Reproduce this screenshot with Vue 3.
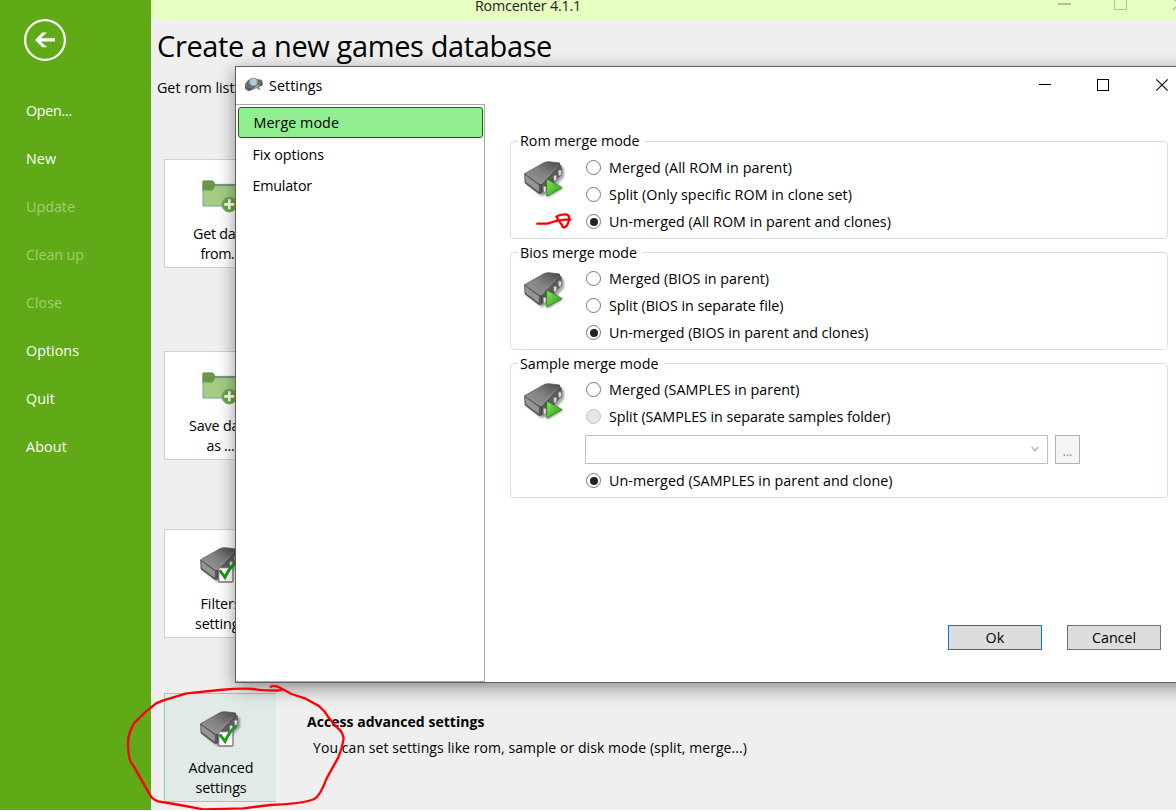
<script setup>
const menu = [
  { label: 'Open...', w: 46 },
  { label: 'New', w: 30 },
  { label: 'Update', w: 49, off: true },
  { label: 'Clean up', w: 58, off: true },
  { label: 'Close', w: 36, off: true },
  { label: 'Options', w: 53 },
  { label: 'Quit', w: 29 },
  { label: 'About', w: 41 }
]

const tiles = [
  { id: 'get', icon: 'folder', lines: [['Get data', 55], ['from...', 40]] },
  { id: 'save', icon: 'folder', lines: [['Save data', 63], ['as ...', 28]] },
  { id: 'filters', icon: 'check', lines: [['Filters', 40], ['settings', 51]] },
  { id: 'advanced', icon: 'check', lines: [['Advanced', 65], ['settings', 51]] }
]

const groups = [
  {
    id: 'rom', title: 'Rom merge mode', w: 119.5,
    options: [
      { text: 'Merged (All ROM in parent)', w: 183 },
      { text: 'Split (Only specific ROM in clone set)', w: 243 },
      { text: 'Un-merged (All ROM in parent and clones)', w: 282, on: true }
    ]
  },
  {
    id: 'bios', title: 'Bios merge mode', w: 117,
    options: [
      { text: 'Merged (BIOS in parent)', w: 160 },
      { text: 'Split (BIOS in separate file)', w: 174.5 },
      { text: 'Un-merged (BIOS in parent and clones)', w: 259.5, on: true }
    ]
  },
  {
    id: 'sample', title: 'Sample merge mode', w: 138.5,
    options: [
      { text: 'Merged (SAMPLES in parent)', w: 190.5 },
      { text: 'Split (SAMPLES in separate samples folder)', w: 281.5, off: true, folder: true },
      { text: 'Un-merged (SAMPLES in parent and clone)', w: 283.5, on: true }
    ]
  }
]

// Tracks a label so that it takes the given width in pixels.
const vFit = {
  mounted(el, { value }) {
    const gap = value - el.getBoundingClientRect().width
    el.style.letterSpacing = gap / el.textContent.length + 'px'
  }
}
</script>

<template>
  <div class="window">
    <svg class="defs" width="0" height="0">
      <defs>
        <linearGradient id="face" x1="0" y1="1" x2="1" y2="0">
          <stop offset="0" stop-color="#999" />
          <stop offset=".5" stop-color="#828282" />
          <stop offset="1" stop-color="#4a4a4a" />
        </linearGradient>
        <linearGradient id="play" x1="0" y1="0" x2="1" y2="1">
          <stop offset="0" stop-color="#8fe25c" />
          <stop offset="1" stop-color="#1fa012" />
        </linearGradient>
        <filter id="soft" x="-20%" y="-20%" width="140%" height="140%">
          <feGaussianBlur stdDeviation="3" />
        </filter>
        <symbol id="chip" viewBox="0 0 126 120">
          <path d="M6 68L52 106L72 100L120 48L120 20L70 8Z" fill="#000" opacity=".35" filter="url(#soft)" />
          <path d="M50 74L106 8L113 14L115 38L66 90L52 96Z" fill="#5c5c5c" />
          <g fill="#dcdcdc" stroke="#666" stroke-width="2">
            <path d="M57 78q8-7 11 2l-2 12l-7 5z" />
            <path d="M73 62q8-7 11 2l-2 11l-7 3z" />
            <path d="M88 45q8-7 11 2l-2 11l-7 3z" />
            <path d="M102 29q8-7 11 2l-1 11l-8 3z" />
          </g>
          <path d="M2 38L60 5Q66 2 74 2L107 6L104 20L54 70Q50 73 45 70Z" fill="url(#face)" stroke="#444" stroke-width="2" />
          <path d="M2 39L46 70L53 72L52 97L44 97L3 66Z" fill="#5a5a5a" stroke="#3a3a3a" stroke-width="2" />
          <path d="M3 42L45 73L44 92L5 63Z" fill="#959595" />
          <path d="M5 39L47 68L104 12" fill="none" stroke="#b5b5b5" stroke-width="2" opacity=".55" />
        </symbol>
        <symbol id="chip-play" viewBox="0 0 126 120">
          <use href="#chip" width="126" height="120" />
          <path d="M68 54L118 82L70 110Z" fill="#000" opacity=".45" filter="url(#soft)" />
          <path d="M68 54L114 80L68 105Z" fill="url(#play)" stroke="#158510" stroke-width="2" />
        </symbol>
        <symbol id="chip-check" viewBox="0 0 126 120">
          <use href="#chip" width="126" height="120" />
          <rect x="56" y="62" width="43" height="43" rx="3" fill="#fff" stroke="#777" stroke-width="4" />
          <path d="M59 70L75 91Q88 62 110 44" fill="none" stroke="#1e981e" stroke-width="9" />
        </symbol>
        <symbol id="folder" viewBox="0 0 114 102">
          <path d="M3 14H102V78H3Z" fill="#a5cd84" stroke="#8298a4" stroke-width="3" />
          <path d="M2 5Q2 2 5 2H33L40 13H108V17H39L32 31H2Z" fill="#69993f" stroke="#7c8f99" stroke-width="2" />
          <circle cx="82" cy="73" r="23" fill="#67a83e" stroke="#8ebd70" stroke-width="3" />
          <path d="M82 58V88M67 73H97" stroke="#fff" stroke-width="8" />
        </symbol>
      </defs>
    </svg>

    <aside class="side">
      <svg class="back" viewBox="0 0 42 42">
        <circle cx="21" cy="21" r="19.9" fill="none" stroke="#fff" stroke-width="2.2" />
        <path d="M31 19.2V22.6H16.8L23 28.2H18.3L11 20.9L18.3 13.6H23L16.8 19.2Z" fill="#fff" />
      </svg>
      <nav>
        <div v-for="m in menu" :key="m.label" class="entry" :class="{ off: m.off }">
          <span v-fit="m.w">{{ m.label }}</span>
        </div>
      </nav>
    </aside>

    <main class="page">
      <header class="caption">
        <span v-fit="106" class="app">Romcenter 4.1.1</span>
        <svg class="ctl" viewBox="0 0 118 19" fill="none" stroke="#adc48f">
          <path d="M0 4H13" stroke-width="2" />
          <rect x="56.5" y="-3.5" width="12" height="13" />
          <path d="M115 10L127 -2M115 -2L127 10" stroke-width="1.4" />
        </svg>
      </header>
      <h1><span v-fit="395">Create a new games database</span></h1>
      <p class="intro"><span v-fit="77.5">Get rom list</span></p>
      <section v-for="t in tiles" :key="t.id" class="step" :class="t.id">
        <div class="tile">
          <svg v-if="t.icon === 'folder'" class="folder"><use href="#folder" /></svg>
          <svg v-else class="chip"><use href="#chip-check" /></svg>
          <div v-for="l in t.lines" :key="l[0]" class="line"><span v-fit="l[1]">{{ l[0] }}</span></div>
        </div>
        <div v-if="t.id === 'advanced'" class="about">
          <div class="strong"><span v-fit="177.5">Access advanced settings</span></div>
          <div class="detail"><span v-fit="434">You can set settings like rom, sample or disk mode (split, merge...)</span></div>
        </div>
      </section>
    </main>

    <div class="dialog">
      <header class="bar">
        <svg class="logo" viewBox="0 0 18 16">
          <path d="M0 7L3 3L8 1L17 3L18 8L10 12L4 14L0 11Z" fill="#6c6c6c" />
          <path d="M1 10V13M3 11V14M5 11V14M13 8V12M16 6V9" stroke="#444" />
          <circle cx="8.5" cy="5" r="4" fill="#b9cbd8" stroke="#8a8e92" stroke-width="1" />
          <path d="M11 8L15 13" stroke="#61aa62" stroke-width="1.6" />
          <path d="M9 12L14 8" stroke="#bbb" />
        </svg>
        <span v-fit="53.5" class="name">Settings</span>
        <svg class="ctl" viewBox="0 0 137 38" fill="none" stroke="#000">
          <path d="M0 17.5H12" />
          <rect x="58.5" y="12.5" width="11" height="11" />
          <path d="M117.3 12.3L128.7 23.7M117.3 23.7L128.7 12.3" stroke-width="1.1" />
        </svg>
      </header>
      <div class="body">
        <div class="list">
          <div class="item picked"><span v-fit="85.5">Merge mode</span></div>
          <div class="item"><span v-fit="71.5">Fix options</span></div>
          <div class="item"><span v-fit="59.5">Emulator</span></div>
        </div>
        <div class="pane">
          <section v-for="g in groups" :key="g.id" class="group" :class="g.id">
            <div class="legend"><span v-fit="g.w">{{ g.title }}</span></div>
            <svg class="chip"><use href="#chip-play" /></svg>
            <div class="options">
              <template v-for="o in g.options" :key="o.text">
                <div class="option">
                  <i class="radio" :class="{ on: o.on, off: o.off }"></i>
                  <span v-fit="o.w">{{ o.text }}</span>
                </div>
                <div v-if="o.folder" class="picker">
                  <div class="combo">
                    <svg viewBox="0 0 8 6"><path d="M.6 1L4 4.4L7.4 1" fill="none" stroke="#b4b4b4" stroke-width="1.5" /></svg>
                  </div>
                  <div class="more">...</div>
                </div>
              </template>
            </div>
          </section>
          <footer class="actions">
            <div class="btn main"><span v-fit="19">Ok</span></div>
            <div class="btn"><span v-fit="44">Cancel</span></div>
          </footer>
        </div>
      </div>
    </div>

    <svg class="ink" viewBox="0 0 1176 811" fill="none" stroke="#fe0000" stroke-linecap="round" stroke-linejoin="round">
      <path transform="translate(120 670) scale(.33333)" stroke-width="7" d="M452 50Q462 44 480 53L515 72L555 85L598 109Q615 122 625 142L650 172Q668 184 671 205Q667 235 655 262L620 325Q600 378 583 387Q545 402 450 405L370 415L250 418L180 405L115 394Q94 387 88 371L60 322L40 287Q27 272 26 250Q20 210 30 185L41 161L75 127L107 101L130 91L200 70L300 60Q360 54 400 57Q425 63 482 61" />
      <path transform="translate(510 130) scale(.33333)" stroke-width="7" d="M82 281H112L128 276L142 272L165 269L181 269M146 271L139 260Q150 252 168 253Q180 255 177 270Q174 286 165 292Q158 294 156 285L146 271" />
    </svg>
  </div>
</template>

<style>
body { margin: 0; background: #fff; }
</style>

<style scoped>
.window {
  position: relative;
  display: flex;
  width: 1176px;
  height: 810px;
  overflow: hidden;
  background: #efefef;
  color: #000;
  font: 14.3px/20px "Open Sans", "Noto Sans", sans-serif;
  white-space: nowrap;
}
.window * { box-sizing: border-box; }
svg { display: block; flex: none; }
.defs { position: absolute; }
.side { width: 151px; flex: none; background: #60a917; color: #fff; padding: 19px 0 0 24px; }
.back { width: 42px; height: 42px; }
nav { padding: 26px 0 0 2px; }
.entry { height: 48px; line-height: 48px; }
.entry.off { color: #a4cd79; }

.page { flex: 1; min-width: 0; }
.caption { display: flex; height: 19px; background: #e6ffc0; padding-left: 324px; color: #222; }
.app { line-height: 12px; }
.caption .ctl { width: 118px; height: 19px; margin-left: auto; }
h1 { margin: 0; padding: 7px 0 0 6px; font-size: 29px; line-height: 40px; font-weight: 400; }
.intro { margin: 0; padding: 12px 0 0 6px; height: 93px; }
.step { display: flex; margin-left: 13px; height: 109px; }
.save { margin-top: 83px; }
.filters { margin-top: 69px; }
.advanced { margin-top: 55px; }
.tile {
  width: 113px;
  height: 109px;
  border: 1px solid #d0d0d0;
  background: #fff;
  display: flex;
  flex-direction: column;
  align-items: center;
  padding-top: 20px;
}
.advanced .tile { width: 112px; border-color: #92ccb8; border-right: 0; background: #e0eae7; padding-left: 1px; }
.folder { width: 38px; height: 34px; margin-bottom: 10px; }
.tile .chip { width: 42px; height: 40px; margin: -3px 0 7px 0; }
.line { height: 20px; line-height: 20px; }
.about { padding: 19px 0 0 31px; }
.strong { font-size: 14px; font-weight: 700; }
.detail { padding: 6px 0 0 6px; font-size: 14px; }

.dialog {
  position: absolute;
  left: 235px;
  top: 66px;
  width: 960px;
  height: 617px;
  border: 1px solid #606060;
  background: #fff;
  box-shadow: 0 5px 17px rgba(0, 0, 0, .42);
  display: flex;
  flex-direction: column;
}
.bar { display: flex; height: 37px; flex: none; padding-left: 9px; }
.logo { width: 18px; height: 16px; margin-top: 10px; }
.name { line-height: 38px; margin-left: 6px; }
.bar .ctl { width: 137px; height: 38px; margin-left: auto; margin-right: 18px; }
.body { display: flex; flex: 1; min-height: 0; }
.list { width: 249px; flex: none; border: 1px solid #a9a9b1; border-left: 0; padding: 2px 1px 0 2px; }
.item { height: 31px; line-height: 32px; padding-left: 14.5px; }
.picked { background: #90ee90; border: 1px solid #146414; border-radius: 3px; padding-left: 14.5px; line-height: 29px; margin-bottom: 1px; }
.pane { width: 691px; flex: none; padding: 37px 8px 0 25px; display: flex; flex-direction: column; }
.group {
  display: grid;
  grid-template-columns: 75px 1fr;
  grid-template-rows: 12px 1fr;
  border: 1px solid #d5dfe5;
  border-radius: 4px;
  height: 98px;
  margin-bottom: 13px;
  flex: none;
}
.group.sample { height: 135px; margin-bottom: 0; }
.legend {
  grid-column: 1 / 3;
  justify-self: start;
  margin: -11px 0 0 7px;
  padding: 0 5px 0 2px;
  height: 20px;
  background: #fff;
}
.bios .legend, .sample .legend { margin-top: -10px; }
.group .chip { width: 42px; height: 40px; margin: 7px 0 0 13px; }
.option { display: flex; align-items: center; height: 27.4px; }
.radio {
  flex: none;
  width: 15px;
  height: 15px;
  border: 1px solid #777;
  border-radius: 50%;
  margin: 0 8px 1px 0;
  display: grid;
  place-items: center;
}
.radio.on::after { content: ""; width: 8px; height: 8px; border-radius: 50%; background: #222; }
.radio.off { background: #e6e6e6; border-color: #c3c3c3; }
.picker { display: flex; gap: 7px; margin: 4px 0 4px -1px; height: 29px; }
.combo { width: 463px; border: 1px solid #bfbfbf; display: flex; justify-content: flex-end; padding: 10px 8px 0 0; }
.combo svg { width: 8px; height: 6px; }
.more { width: 25px; background: #f4f4f4; border: 1px solid #adb2b5; color: #838383; text-align: center; font-size: 12px; line-height: 32px; }
.actions { display: flex; gap: 25px; justify-content: flex-end; padding: 127px 7px 0 0; }
.btn { width: 94px; height: 25px; border: 1px solid #707070; background: #ddd; text-align: center; line-height: 23px; }
.btn.main { border-color: #0078d7; }
.ink { position: absolute; left: 0; top: 0; width: 1176px; height: 811px; pointer-events: none; }
</style>
